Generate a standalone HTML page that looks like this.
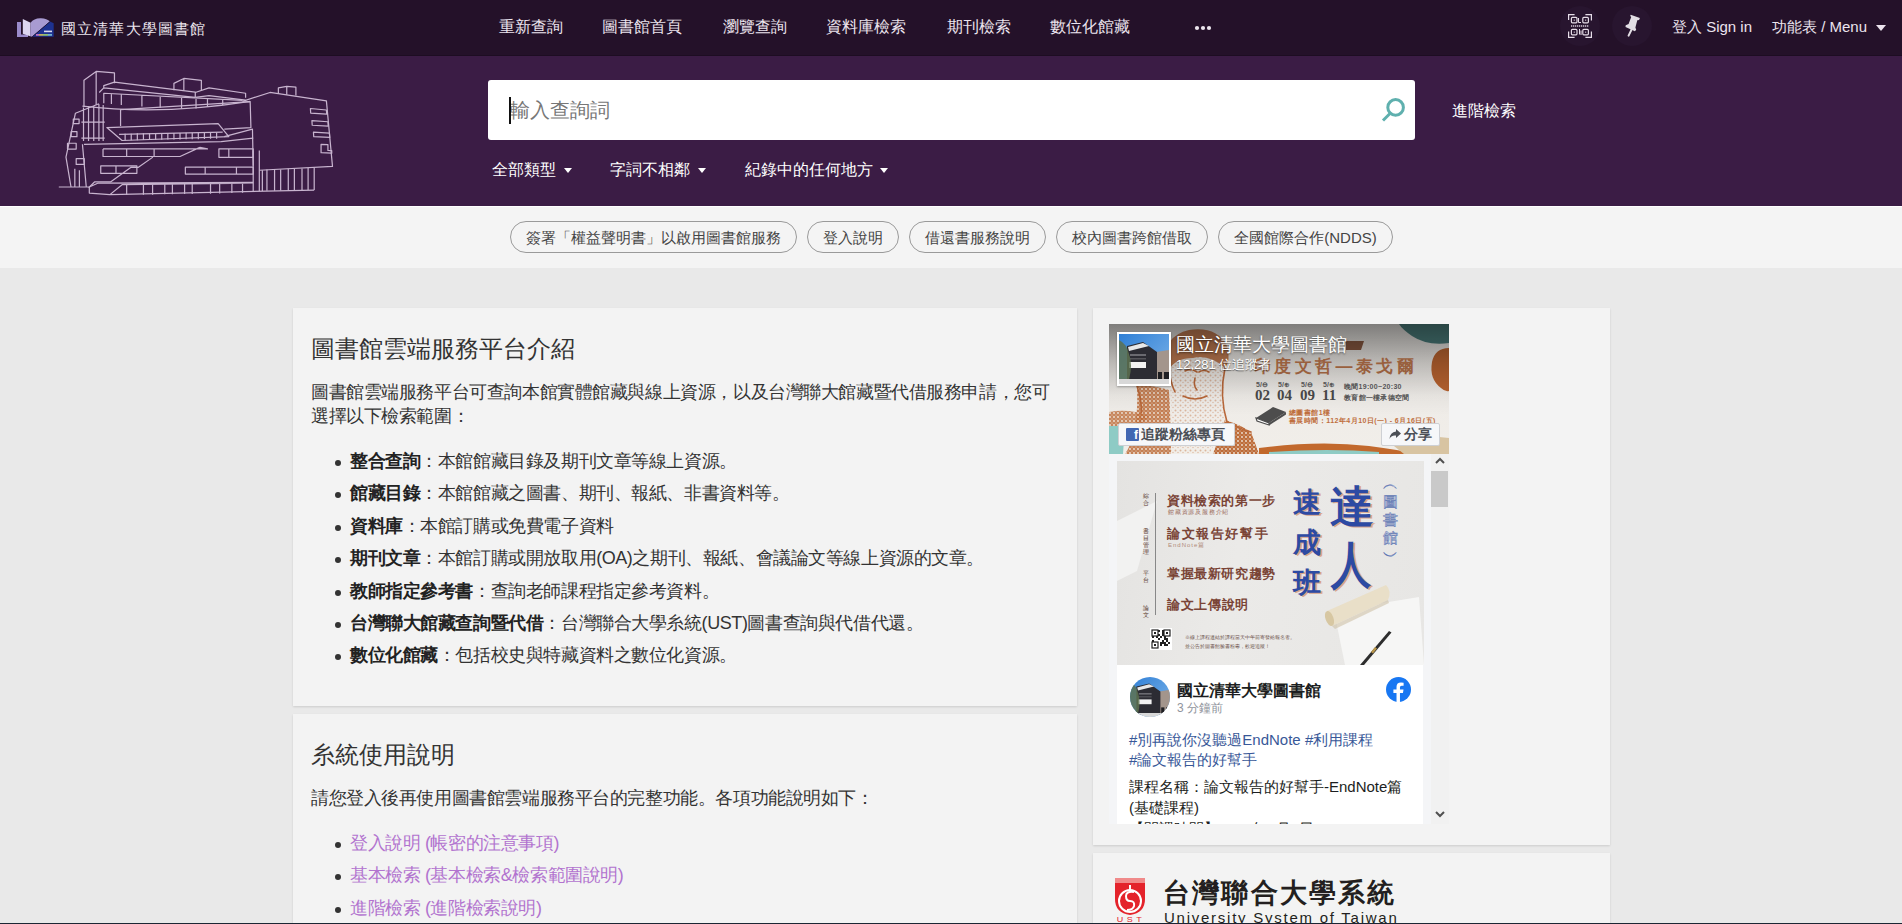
<!DOCTYPE html>
<html lang="zh-Hant">
<head>
<meta charset="utf-8">
<title>圖書館雲端服務平台</title>
<style>
*{box-sizing:border-box;margin:0;padding:0}
html,body{width:1902px;height:924px;overflow:hidden}
body{background:#e9e9e9;font-family:"Liberation Sans",sans-serif;color:#333;position:relative}
.abs{position:absolute}
#nav{position:absolute;left:0;top:0;width:1902px;height:56px;background:#241129;border-bottom:1px solid #1d0d22}
.nv{position:absolute;top:16px;font-size:16px;line-height:22px;font-weight:500;color:#ece4ee;white-space:nowrap}
#band{position:absolute;left:0;top:56px;width:1902px;height:150px;background:#3b1c45}
#chipband{position:absolute;left:0;top:206px;width:1902px;height:62px;background:#f4f4f4;border-top:1px solid #fff}
.chip{position:absolute;top:221px;height:32px;border:1px solid #9a9a9a;border-radius:16px;font-size:15px;line-height:32px;color:#444;text-align:center;white-space:nowrap}
.card{position:absolute;background:#f3f3f3;box-shadow:0 1px 2px rgba(0,0,0,.12)}
.ttl{position:absolute;font-size:24px;line-height:30px;color:#333;white-space:nowrap}
.p{position:absolute;font-size:18px;letter-spacing:-0.42px;line-height:24px;color:#333;white-space:nowrap}
.li{position:absolute;font-size:18px;letter-spacing:-0.42px;line-height:24px;color:#333;white-space:nowrap}
.li b{font-weight:bold;color:#222}
.dot{position:absolute;width:6px;height:6px;border-radius:50%;background:#333}
.lk{color:#b274cf}
</style>
</head>
<body>
<div id="nav"></div>
<div id="band"></div>
<div id="chipband"></div>

<!-- logo -->
<svg class="abs" style="left:14px;top:16px" width="44" height="24" viewBox="0 0 44 24">
<path d="M3 6 H7 V18.5 H14 V21 H3 Z" fill="#9a8bcb"/>
<path d="M8.8 3.1 L16.6 6.8 L16.1 20.3 L8.8 17.7 Z" fill="#ddd6f0"/>
<path d="M16.6 6.8 Q20 2 27 2.3 Q33 2.6 36 5.6 L18.2 20.8 L16.1 20.3 Z" fill="#a89bd2"/>
<path d="M36 5.6 L39.7 7.3 V20.8 H18.2 Z" fill="#1e3290"/>
<path d="M36 5.6 L18.2 20.8" stroke="#1a1030" stroke-width="0.8"/>
<rect x="30" y="14.6" width="8" height="1.6" fill="#d8d8ee"/>
<rect x="22" y="18" width="3" height="1.8" fill="#c070c0"/><rect x="25" y="18" width="4" height="1.8" fill="#c0b060"/><rect x="29" y="18" width="5" height="1.8" fill="#90c070"/><rect x="34" y="18" width="4" height="1.8" fill="#70b0d0"/>
</svg>
<div class="abs" style="left:61px;top:19px;font-size:15px;line-height:20px;letter-spacing:1.15px;color:#ece6ee;white-space:nowrap;font-weight:300;font-family:'Liberation Serif',serif">國立清華大學圖書館</div>
<svg class="abs" style="left:55px;top:65px" width="290" height="135" viewBox="0 0 1902 885" fill="none" stroke="#c8b4cf" stroke-width="8" stroke-linejoin="round">
<path d="M190 275 L190 100 L270 42 L390 52 L390 120 M270 42 L270 260"/>
<path d="M320 150 L320 135 L390 112 L920 178 L920 210 M290 180 L320 150 L920 212"/>
<path d="M780 165 L780 120 L845 88 L960 100 L960 165 M845 88 L845 165"/>
<path d="M920 180 L1010 150 L1250 185 L1250 215 M920 212 L1010 200 L1250 230"/>
<path d="M320 250 L320 185 L1230 232 M370 190 L370 255 M435 195 L435 262 M570 200 L570 272 M690 205 L690 280 M830 215 L830 285 M925 222 L925 285 M1000 225 L1000 275 M1100 230 L1100 262"/>
<path d="M180 270 Q700 330 1280 238"/>
<path d="M1230 238 L1410 180 L1780 235 L1820 665 L1340 690"/>
<path d="M1465 190 L1465 150 L1520 140 L1580 145 L1580 200 M1520 140 L1520 195"/>
<path d="M1675 285 L1780 295 L1782 322 L1677 315 Z M1685 365 L1790 372 L1792 400 L1687 395 Z M1695 440 L1800 447 L1802 475 L1697 470 Z M1745 520 L1790 522 L1790 560 L1815 562 L1815 578 L1745 575 Z"/>
<path d="M430 290 L430 400 M430 292 L1280 240 L1285 410 L1110 420"/>
<path d="M340 410 L1070 385 L1140 470 L440 495 Z M420 455 L1100 440"/>
<path d="M460 450 V495 M500 450 V494 M540 448 V493 M580 448 V492 M620 447 V491 M660 447 V490 M700 446 V490 M740 446 V489 M780 445 V488 M820 445 V488 M860 444 V487 M900 444 V486 M940 443 V486 M980 443 V485 M1020 442 V484 M1060 442 V483"/>
<path d="M1110 470 L1295 420 L1300 660"/>
<path d="M105 800 L72 604 L134 316 L288 254 M187 278 V499 M220 272 V499 M254 266 V499 M288 258 V499 M316 262 V499 M173 374 H326 M173 479 H326"/>
<path d="M120 355 H158 V384 H120 Z M106 437 H144 V470 H106 Z M82 513 H139 V551 H82 Z M139 614 H192 V652 H139 Z M130 680 V800 M160 690 V800"/>
<path d="M190 520 L1090 503 L1300 480 M180 520 L205 800"/>
<path d="M315 550 H1000 L950 540 M315 550 V600 H820 L950 540 M470 550 V600 M650 550 V600"/>
<path d="M300 662 H537 V710 H300 Z M400 662 V710 M221 805 L259 767 L364 767 L499 671 L547 671 L642 604"/>
<path d="M855 670 H1300 V715 H855 Z M985 670 V715 M1190 670 V715 M1075 550 H1300 V605 H1075 Z M1140 550 V605"/>
<path d="M25 800 H225 L280 775 L1300 770 M225 800 L225 840 L360 850 L1700 820 M360 850 L440 785 L1300 775"/>
<path d="M470 785 V850 M580 783 V850 M640 783 V850 M720 782 V848 M770 782 V848 M850 781 V846 M900 781 V846 M1020 780 V844 M1080 780 V842 M1160 778 V840 M1230 778 V838"/>
<path d="M1300 560 V830 M1340 560 V828 M1360 690 V826 M1390 685 V825 M1440 685 V824 M1480 685 V823 M1530 680 V822 M1570 680 V822 M1620 678 V821 M1660 675 V820 M1700 672 V820"/>
</svg>
<!-- nav items -->
<div class="nv" style="left:499px">重新查詢</div>
<div class="nv" style="left:602px">圖書館首頁</div>
<div class="nv" style="left:723px">瀏覽查詢</div>
<div class="nv" style="left:826px">資料庫檢索</div>
<div class="nv" style="left:947px">期刊檢索</div>
<div class="nv" style="left:1050px">數位化館藏</div>
<svg class="abs" style="left:1194px;top:25px" width="19" height="6" viewBox="0 0 19 6" fill="#ece6ee"><circle cx="3" cy="3" r="2.1"/><circle cx="9" cy="3" r="2.1"/><circle cx="15" cy="3" r="2.1"/></svg>
<div class="nv" style="left:1672px;top:16px;font-weight:normal;font-size:15px">登入 Sign in</div>
<div class="nv" style="left:1772px;top:16px;font-weight:normal;font-size:15px">功能表 / Menu</div>
<div class="abs" style="left:1876px;top:25px;width:0;height:0;border-left:5px solid transparent;border-right:5px solid transparent;border-top:6px solid #ece4ee"></div>
<!-- icon circles -->
<div class="abs" style="left:1560px;top:6px;width:40px;height:40px;border-radius:50%;background:#28152f"></div>
<div class="abs" style="left:1612px;top:6px;width:40px;height:40px;border-radius:50%;background:#28152f"></div>
<svg class="abs" style="left:1568px;top:14px" width="24" height="24" viewBox="0 0 24 24" fill="none" stroke="#e6dde8" stroke-width="1.2">
<path d="M0.6 6V0.6h6M17.4 0.6h6v6M23.4 17.4v6h-6M6.6 23.4H0.6v-6"/>
<rect x="3.4" y="3.4" width="5.6" height="5.4" rx="1"/><rect x="14.8" y="3.4" width="5.6" height="5.4" rx="1"/>
<rect x="3.4" y="15.4" width="5.6" height="5.4" rx="1"/><rect x="14.8" y="15.4" width="5.6" height="5.4" rx="1"/>
<g fill="#e6dde8" stroke="none"><rect x="5.7" y="5.6" width="1.1" height="1.1"/><rect x="17.1" y="5.6" width="1.1" height="1.1"/><rect x="5.7" y="17.6" width="1.1" height="1.1"/><rect x="17.1" y="17.6" width="1.1" height="1.1"/></g>
<path d="M10.5 4 V8.5 H13 M11.5 15 V20.5 M13 16.5 V21" stroke-width="1"/>
<path d="M3 12h18" stroke-dasharray="1.3 0.7" stroke="#a99cae" stroke-width="2.2"/>
</svg>
<svg class="abs" style="left:1622px;top:13px" width="22" height="24" viewBox="0 0 22 24">
<path d="M8.7 1.7 L17.9 5.1 L17.1 6.9 L15.3 7.2 L13.4 14.6 L14.2 16.7 L12.9 18.3 L3.5 14.1 L3.7 12.2 L6.6 10.9 L9.2 4.1 L8.2 3 Z" fill="#e2dee4"/>
<path d="M9.6 16.5 L6.6 22.6" stroke="#e2dee4" stroke-width="2" stroke-linecap="round"/>
</svg>

<!-- search -->
<div class="abs" style="left:488px;top:80px;width:927px;height:60px;background:#fff;border-radius:3px"></div>
<div class="abs" style="left:510px;top:96px;font-size:20px;line-height:28px;color:#777">輸入查詢詞</div>
<div class="abs" style="left:509px;top:97px;width:2px;height:27px;background:#111"></div>
<svg class="abs" style="left:1378px;top:94px" width="30" height="32" viewBox="0 0 30 32" fill="none" stroke="#5fb0ae" stroke-width="3">
<circle cx="17.6" cy="13.4" r="7.8"/><path d="M12 19.5 L5 26.5" stroke-linecap="butt"/></svg>
<div class="abs" style="left:564px;top:168px;width:0;height:0;border-left:4.5px solid transparent;border-right:4.5px solid transparent;border-top:5px solid #fff"></div>
<div class="abs" style="left:698px;top:168px;width:0;height:0;border-left:4.5px solid transparent;border-right:4.5px solid transparent;border-top:5px solid #fff"></div>
<div class="abs" style="left:880px;top:168px;width:0;height:0;border-left:4.5px solid transparent;border-right:4.5px solid transparent;border-top:5px solid #fff"></div>
<div class="abs" style="left:1452px;top:100px;font-size:16px;line-height:22px;color:#fff;font-weight:500">進階檢索</div>
<div class="abs" style="left:492px;top:159px;font-size:16px;line-height:22px;color:#fff">全部類型</div>
<div class="abs" style="left:610px;top:159px;font-size:16px;line-height:22px;color:#fff">字詞不相鄰</div>
<div class="abs" style="left:745px;top:159px;font-size:16px;line-height:22px;color:#fff">紀錄中的任何地方</div>

<!-- chips -->
<div class="chip" style="left:510px;width:287px">簽署「權益聲明書」以啟用圖書館服務</div>
<div class="chip" style="left:807px;width:92px">登入說明</div>
<div class="chip" style="left:909px;width:137px">借還書服務說明</div>
<div class="chip" style="left:1056px;width:152px">校內圖書跨館借取</div>
<div class="chip" style="left:1218px;width:175px">全國館際合作(NDDS)</div>

<!-- cards -->
<div class="card" style="left:293px;top:308px;width:784px;height:398px"></div>
<div class="card" style="left:293px;top:714px;width:784px;height:260px"></div>
<div class="card" style="left:1093px;top:308px;width:517px;height:537px"></div>
<div class="card" style="left:1093px;top:853px;width:517px;height:200px"></div>


<!-- card 1 content -->
<div class="ttl" style="left:311px;top:334px">圖書館雲端服務平台介紹</div>
<div class="p" style="left:311px;top:380px">圖書館雲端服務平台可查詢本館實體館藏與線上資源，以及台灣聯大館藏暨代借服務申請，您可</div>
<div class="p" style="left:311px;top:404px">選擇以下檢索範圍：</div>
<div class="dot" style="left:335px;top:460px"></div><div class="li" style="left:350px;top:449px"><b>整合查詢</b>：本館館藏目錄及期刊文章等線上資源。</div>
<div class="dot" style="left:335px;top:492px"></div><div class="li" style="left:350px;top:481px"><b>館藏目錄</b>：本館館藏之圖書、期刊、報紙、非書資料等。</div>
<div class="dot" style="left:335px;top:525px"></div><div class="li" style="left:350px;top:514px"><b>資料庫</b>：本館訂購或免費電子資料</div>
<div class="dot" style="left:335px;top:557px"></div><div class="li" style="left:350px;top:546px"><b>期刊文章</b>：本館訂購或開放取用(OA)之期刊、報紙、會議論文等線上資源的文章。</div>
<div class="dot" style="left:335px;top:590px"></div><div class="li" style="left:350px;top:579px"><b>教師指定參考書</b>：查詢老師課程指定參考資料。</div>
<div class="dot" style="left:335px;top:622px"></div><div class="li" style="left:350px;top:611px"><b>台灣聯大館藏查詢暨代借</b>：台灣聯合大學糸統(UST)圖書查詢與代借代還。</div>
<div class="dot" style="left:335px;top:654px"></div><div class="li" style="left:350px;top:643px"><b>數位化館藏</b>：包括校史與特藏資料之數位化資源。</div>
<!-- card 2 content -->
<div class="ttl" style="left:311px;top:740px">糸統使用說明</div>
<div class="p" style="left:311px;top:786px">請您登入後再使用圖書館雲端服務平台的完整功能。各項功能說明如下：</div>
<div class="dot" style="left:335px;top:842px"></div><div class="li lk" style="left:350px;top:831px">登入說明 (帳密的注意事項)</div>
<div class="dot" style="left:335px;top:874px"></div><div class="li lk" style="left:350px;top:863px">基本檢索 (基本檢索&amp;檢索範圍說明)</div>
<div class="dot" style="left:335px;top:907px"></div><div class="li lk" style="left:350px;top:896px">進階檢索 (進階檢索說明)</div>

<!-- FB widget -->
<div class="abs" style="left:1109px;top:324px;width:340px;height:500px;overflow:hidden;background:#f4f5f7">
 <!-- cover -->
 <div class="abs" style="left:0;top:0;width:340px;height:130px;overflow:hidden;background:linear-gradient(180deg,#e6e3df 0%,#efece8 60%,#f1eee9 100%)">
  <svg class="abs" style="left:0;top:0" width="340" height="130" viewBox="0 0 340 130">
   <path d="M290 0 L340 0 L340 19 Q318 22 303 12 Q293 5 290 0Z" fill="#4c7f7d"/>
   <path d="M340 24 Q326 24 323 38 Q320 55 332 64 Q336 68 340 67Z" fill="#b9632f"/>
   <defs>
    <pattern id="spk" width="4" height="4" patternUnits="userSpaceOnUse"><rect width="4" height="4" fill="#bd6c3a"/><circle cx="1" cy="1" r=".9" fill="#f0e6dc"/><circle cx="3" cy="3" r=".6" fill="#e8d6c6"/></pattern>
    <pattern id="spk2" width="5" height="5" patternUnits="userSpaceOnUse"><circle cx="1.5" cy="1.5" r="1" fill="#c27444"/><circle cx="4" cy="3.5" r=".7" fill="#c27444"/></pattern>
   </defs>
   <path d="M56 40 Q54 12 80 6 Q108 2 118 22 Q122 36 116 44 Q100 30 84 34 Q66 34 60 46Z" fill="#b86838" opacity=".85"/>
   <path d="M60 46 Q66 34 84 34 Q100 30 116 44 Q112 70 118 98 L100 130 L62 130 Q64 90 60 46Z" fill="url(#spk2)" opacity=".45"/>
   <path d="M28 62 Q40 60 60 66 Q62 100 62 130 L16 130 Q30 110 28 62Z" fill="url(#spk)" opacity=".85"/>
   <path d="M116 96 Q130 100 142 108 L150 130 L104 130Z" fill="url(#spk)"/>
   <g fill="none" stroke="#b9683a" stroke-width="1.6" stroke-linecap="round">
    <path d="M60 46 Q62 60 66 68 M116 44 Q110 72 118 98 Q128 104 142 108"/>
    <path d="M76 47 Q82 44 88 48 M90 48 Q95 45 100 48 M86 54 Q84 62 88 66 M74 72 Q86 78 98 72"/>
    <path d="M28 62 Q36 84 30 106"/>
   </g>
   <path d="M0 88 Q20 84 40 92 L30 102 L0 102Z" fill="url(#spk)" opacity=".8"/>
   <path d="M0 102 L16 102 L14 130 L0 130Z" fill="#8ecbc5"/>
   <path d="M150 124 Q210 116 260 122 Q290 126 310 130 L150 130Z" fill="#c2692d"/>
   <path d="M160 128 Q220 124 270 128 L270 130 L160 130Z" fill="#8ecbc5"/>
   <path d="M280 118 Q310 110 340 114 L340 130 L295 130Z" fill="#d8c4a2"/>
   <path d="M237 17 L255 17 L252 26 L237 26Z" fill="#8a5a42"/>
  </svg>
  <div class="abs" style="left:0;top:0;width:340px;height:130px;background:linear-gradient(180deg,rgba(0,0,0,.45) 0%,rgba(0,0,0,.2) 30%,rgba(0,0,0,.04) 55%,rgba(0,0,0,0) 70%)"></div>
  <div class="abs" style="left:145px;top:32px;font-size:17px;line-height:22px;font-weight:bold;color:#99603e;letter-spacing:3.4px;white-space:nowrap">印度文哲—泰戈爾</div>
  <div class="abs" style="left:147px;top:57px;font-size:7px;line-height:8px;color:#555;white-space:nowrap;font-weight:bold">5/⊖</div><div class="abs" style="left:146px;top:63px;font-size:15px;line-height:16px;font-weight:bold;color:#474747;white-space:nowrap;font-family:'Liberation Serif',serif">02</div><div class="abs" style="left:169px;top:57px;font-size:7px;line-height:8px;color:#555;white-space:nowrap;font-weight:bold">5/⊕</div><div class="abs" style="left:168px;top:63px;font-size:15px;line-height:16px;font-weight:bold;color:#474747;white-space:nowrap;font-family:'Liberation Serif',serif">04</div><div class="abs" style="left:192px;top:57px;font-size:7px;line-height:8px;color:#555;white-space:nowrap;font-weight:bold">5/⊖</div><div class="abs" style="left:191px;top:63px;font-size:15px;line-height:16px;font-weight:bold;color:#474747;white-space:nowrap;font-family:'Liberation Serif',serif">09</div><div class="abs" style="left:214px;top:57px;font-size:7px;line-height:8px;color:#555;white-space:nowrap;font-weight:bold">5/⊕</div><div class="abs" style="left:213px;top:63px;font-size:15px;line-height:16px;font-weight:bold;color:#474747;white-space:nowrap;font-family:'Liberation Serif',serif">11</div>
  <div class="abs" style="left:235px;top:57px;font-size:7px;line-height:11px;color:#555;white-space:nowrap;font-weight:bold;letter-spacing:.3px">晚間19:00~20:30<br>教育館一樓承德空間</div>
  <svg class="abs" style="left:146px;top:82px" width="32" height="20" viewBox="0 0 32 20"><path d="M1 12 L18 1 L31 6 L14 17 Z" fill="#4d4d4d"/><path d="M1 12 L14 17 L14 19 L2 15Z" fill="#fff" stroke="#4d4d4d" stroke-width="1.2"/><path d="M14 17 L31 6 L31 8.5 L14 19.5Z" fill="#4d4d4d"/></svg>
  <div class="abs" style="left:180px;top:85px;font-size:7px;line-height:8px;color:#bf6f3e;white-space:nowrap;font-weight:bold;letter-spacing:.45px">總圖書館1樓<br>書展時間：112年4月10日(一) - 6月16日(五)</div>
  <!-- avatar -->
  <div class="abs" style="left:8px;top:8px;width:54px;height:54px;background:#fff;padding:2px;box-shadow:0 1px 2px rgba(0,0,0,.3)"><svg width="50" height="50" viewBox="0 0 50 50" style="display:block"><defs><linearGradient id="skya" x1="0" y1="0" x2="1" y2="1"><stop offset="0" stop-color="#2f7fd6"/><stop offset="1" stop-color="#7fb6ea"/></linearGradient></defs>
<rect width="50" height="50" fill="url(#skya)"/>
<path d="M37 18 L50 16 V46 H37Z" fill="#a3958c"/>
<path d="M8 12 L24 8 L38 18 L38 47 L8 47Z" fill="#2c2c33"/>
<path d="M9 13 L24 9 L30 12 L10 17Z" fill="#e8e8e8"/>
<rect x="11" y="20" width="16" height="2" fill="#6a6a70"/><rect x="11" y="24" width="16" height="1.5" fill="#55555a"/>
<rect x="10" y="28" width="17" height="6" fill="#f2f2f2"/>
<rect x="39" y="38" width="4" height="8" fill="#1e1e22"/><rect x="45" y="38" width="5" height="8" fill="#1e1e22"/>
<path d="M0 6 Q8 10 10 20 Q14 30 10 46 L0 46Z" fill="#5d7150" opacity=".85"/>
<rect x="0" y="45" width="50" height="5" fill="#d8d8d8"/>
</svg></div>
  <div class="abs" style="left:67px;top:10px;font-size:19px;line-height:22px;color:#fff;white-space:nowrap;text-shadow:0 1px 2px rgba(0,0,0,.6)">國立清華大學圖書館</div>
  <div class="abs" style="left:67px;top:33px;font-size:13px;line-height:16px;color:#fff;white-space:nowrap;text-shadow:0 1px 1px rgba(0,0,0,.55)">12,281 位追蹤者</div>
  <!-- buttons -->
  <div class="abs" style="left:9px;top:99px;width:117px;height:23px;background:#f6f7f9;border:1px solid #ced0d4;border-radius:2px"></div>
  <div class="abs" style="left:17px;top:104px;width:13px;height:13px;background:#4267b2;border-radius:1px;color:#fff;font-size:12px;line-height:15px;font-weight:bold;text-align:right;padding-right:1px;overflow:hidden">f</div>
  <div class="abs" style="left:32px;top:101px;font-size:14px;line-height:19px;font-weight:bold;color:#4b4f56;white-space:nowrap">追蹤粉絲專頁</div>
  <div class="abs" style="left:272px;top:99px;width:59px;height:23px;background:#f6f7f9;border:1px solid #ced0d4;border-radius:2px"></div>
  <svg class="abs" style="left:280px;top:104px" width="12" height="12" viewBox="0 0 12 12"><path d="M7 1 L12 5.5 L7 10 V7.5 Q2 7 0.5 11 Q1 4 7 3.5Z" fill="#4b4f56"/></svg>
  <div class="abs" style="left:295px;top:101px;font-size:14px;line-height:19px;font-weight:bold;color:#4b4f56;white-space:nowrap">分享</div>
 </div>
 <!-- scrollbar -->
 <div class="abs" style="left:322px;top:130px;width:18px;height:370px;background:#f1f1f1"></div>
 <svg class="abs" style="left:325px;top:133px" width="12" height="8" viewBox="0 0 12 8"><path d="M2 6 L6 2 L10 6" fill="none" stroke="#505050" stroke-width="2"/></svg>
 <div class="abs" style="left:322px;top:147px;width:17px;height:36px;background:#c9c9c9"></div>
 <svg class="abs" style="left:325px;top:486px" width="12" height="8" viewBox="0 0 12 8"><path d="M2 2 L6 6 L10 2" fill="none" stroke="#505050" stroke-width="2"/></svg>
 <!-- post image -->
 <div class="abs" style="left:8px;top:137px;width:307px;height:204px;overflow:hidden;background:linear-gradient(100deg,#e4e3e1 0%,#ebeae8 40%,#e7e6e4 100%)">
  <svg class="abs" style="left:0;top:0" width="307" height="204" viewBox="0 0 307 204">
   <path d="M0 60 L40 40 L20 110 L0 120Z" fill="#f2f2f1"/>
   <path d="M217 150 L302 136 L307 204 L228 204Z" fill="#f6f6f5"/>
   <path d="M210 150 L269 124 Q275 130 271 139 L215 165 Z" fill="#e9dfc8"/>
   <ellipse cx="212.5" cy="157.5" rx="4" ry="7.8" transform="rotate(-20 212.5 157.5)" fill="#d7c7a2"/>
   <path d="M215 165 L271 139 L272 142 L218 168Z" fill="#cfc2a6" opacity=".6"/>
   <path d="M243 204 L272 170 L274.5 171.5 L247 204Z" fill="#2d2d2d"/>
   <path d="M254 191 L258 186 L260 187.5 L256 192.5Z" fill="#b8964a"/>
<rect x="38" y="32" width="1" height="122" fill="#888"/>
   <rect x="33" y="167" width="22" height="22" fill="#fff"/><rect x="41.0" y="169.0" width="2" height="2" fill="#222"/><rect x="45.0" y="169.0" width="2" height="2" fill="#222"/><rect x="45.0" y="171.0" width="2" height="2" fill="#222"/><rect x="41.0" y="173.0" width="2" height="2" fill="#222"/><rect x="45.0" y="173.0" width="2" height="2" fill="#222"/><rect x="35.0" y="175.0" width="2" height="2" fill="#222"/><rect x="39.0" y="175.0" width="2" height="2" fill="#222"/><rect x="43.0" y="175.0" width="2" height="2" fill="#222"/><rect x="47.0" y="175.0" width="2" height="2" fill="#222"/><rect x="41.0" y="177.0" width="2" height="2" fill="#222"/><rect x="47.0" y="177.0" width="2" height="2" fill="#222"/><rect x="49.0" y="177.0" width="2" height="2" fill="#222"/><rect x="35.0" y="179.0" width="2" height="2" fill="#222"/><rect x="45.0" y="179.0" width="2" height="2" fill="#222"/><rect x="49.0" y="179.0" width="2" height="2" fill="#222"/><rect x="43.0" y="181.0" width="2" height="2" fill="#222"/><rect x="45.0" y="181.0" width="2" height="2" fill="#222"/><rect x="47.0" y="181.0" width="2" height="2" fill="#222"/><rect x="51.0" y="181.0" width="2" height="2" fill="#222"/><rect x="43.0" y="183.0" width="2" height="2" fill="#222"/><rect x="47.0" y="183.0" width="2" height="2" fill="#222"/><rect x="49.0" y="183.0" width="2" height="2" fill="#222"/><rect x="35" y="169" width="6" height="6" fill="none" stroke="#222" stroke-width="1.2"/><rect x="47" y="169" width="6" height="6" fill="none" stroke="#222" stroke-width="1.2"/><rect x="35" y="181" width="6" height="6" fill="none" stroke="#222" stroke-width="1.2"/><rect x="37" y="171" width="2" height="2" fill="#222"/><rect x="49" y="171" width="2" height="2" fill="#222"/><rect x="37" y="183" width="2" height="2" fill="#222"/>
  </svg>
  <div class="abs" style="left:26px;top:32px;font-size:6px;line-height:7px;width:8px;color:#5a3a30;font-family:'Liberation Serif',serif">綜<br>合<br><br><br><br>書<br>目<br>管<br>理<br><br><br>平<br>台<br><br><br><br>論<br>文</div>
  <div class="abs" style="left:50px;top:33px;font-size:12.5px;line-height:14px;color:#7a4436;font-weight:bold;letter-spacing:0.6px;white-space:nowrap;font-family:'Liberation Serif',serif">資料檢索的第一步</div>
  <div class="abs" style="left:51px;top:48px;font-size:6px;line-height:7px;color:#9a6a5a;white-space:nowrap;letter-spacing:.8px">館藏資源及服務介紹</div>
  <div class="abs" style="left:50px;top:66px;font-size:12.5px;line-height:14px;color:#7a4436;font-weight:bold;letter-spacing:1.6px;white-space:nowrap;font-family:'Liberation Serif',serif">論文報告好幫手</div>
  <div class="abs" style="left:51px;top:81px;font-size:6px;line-height:7px;color:#b08a7a;white-space:nowrap;letter-spacing:1px">EndNote篇</div>
  <div class="abs" style="left:50px;top:106px;font-size:12.5px;line-height:14px;color:#7a4436;font-weight:bold;letter-spacing:0.6px;white-space:nowrap;font-family:'Liberation Serif',serif">掌握最新研究趨勢</div>
  <div class="abs" style="left:50px;top:137px;font-size:12.5px;line-height:14px;color:#7a4436;font-weight:bold;letter-spacing:0.7px;white-space:nowrap;font-family:'Liberation Serif',serif">論文上傳說明</div>
  <div class="abs" style="left:68px;top:172px;font-size:5px;line-height:9px;color:#6a5048;white-space:nowrap">※線上課程連結於課程當天中午前寄發給報名者。<br>並公告於圖書館臉書粉專，歡迎追蹤！</div>
  <div class="abs" style="left:176px;top:22px;font-size:28px;line-height:40px;width:30px;color:#2d4aa3;font-weight:bold;text-shadow:2px 1px 0 #d8a58c">速<br>成<br>班</div>
  <div class="abs" style="left:213px;top:18px;font-size:44px;line-height:56px;color:#2d4aa3;font-weight:bold;text-shadow:2px 1px 0 #d8a58c">達</div><div class="abs" style="left:214px;top:74px;font-size:50px;line-height:60px;color:#2d4aa3;font-weight:bold;text-shadow:2px 1px 0 #d8a58c;transform:scaleX(.8);transform-origin:0 0">人</div>
  <div class="abs" style="left:264px;top:14px;font-size:15px;line-height:18px;width:18px;color:#e9e8e6;-webkit-text-stroke:.5px #5a72b0;color:#dfe3ee;text-align:center">︵<br>圖<br>書<br>館<br>︶</div>
 </div>
 <!-- post card -->
 <div class="abs" style="left:8px;top:341px;width:306px;height:200px;background:#fff">
  <div class="abs" style="left:13px;top:12px;width:40px;height:40px;border-radius:50%;overflow:hidden"><svg width="40" height="40" viewBox="0 0 50 50" style="display:block"><defs><linearGradient id="skyb" x1="0" y1="0" x2="1" y2="1"><stop offset="0" stop-color="#2f7fd6"/><stop offset="1" stop-color="#7fb6ea"/></linearGradient></defs>
<rect width="50" height="50" fill="url(#skyb)"/>
<path d="M37 18 L50 16 V46 H37Z" fill="#a3958c"/>
<path d="M8 12 L24 8 L38 18 L38 47 L8 47Z" fill="#2c2c33"/>
<path d="M9 13 L24 9 L30 12 L10 17Z" fill="#e8e8e8"/>
<rect x="11" y="20" width="16" height="2" fill="#6a6a70"/><rect x="11" y="24" width="16" height="1.5" fill="#55555a"/>
<rect x="10" y="28" width="17" height="6" fill="#f2f2f2"/>
<rect x="39" y="38" width="4" height="8" fill="#1e1e22"/><rect x="45" y="38" width="5" height="8" fill="#1e1e22"/>
<path d="M0 6 Q8 10 10 20 Q14 30 10 46 L0 46Z" fill="#5d7150" opacity=".85"/>
<rect x="0" y="45" width="50" height="5" fill="#d8d8d8"/>
</svg></div>
  <div class="abs" style="left:60px;top:15px;font-size:16px;line-height:21px;font-weight:bold;color:#1c1e21;white-space:nowrap">國立清華大學圖書館</div>
  <div class="abs" style="left:60px;top:35px;font-size:12px;line-height:16px;color:#90949c;white-space:nowrap">3 分鐘前</div>
  <svg class="abs" style="left:269px;top:12px" width="25" height="25" viewBox="0 0 24 24"><circle cx="12" cy="12" r="12" fill="#1877f2"/><path d="M13.4 24 V15.3 H16.3 L16.8 11.9 H13.4 V9.8 Q13.4 8.3 15 8.3 H16.9 V5.4 Q15.8 5.2 14.4 5.2 Q10.1 5.2 10.1 9.4 V11.9 H7.1 V15.3 H10.1 V24Z" fill="#fff"/></svg>
  <div class="abs" style="left:12px;top:65px;font-size:15px;line-height:20px;color:#385898;white-space:nowrap">#別再說你沒聽過EndNote #利用課程<br>#論文報告的好幫手</div>
  <div class="abs" style="left:12px;top:111px;font-size:15px;line-height:21px;color:#1c1e21;white-space:nowrap">課程名稱：論文報告的好幫手-EndNote篇<br>(基礎課程)<br>【開課時間】2023年5月4日</div>
 </div>
</div>
<!-- UST logo -->
<svg class="abs" style="left:1112px;top:877px" width="36" height="46" viewBox="0 0 36 46">
 <path d="M3 1 H33 V22 Q33 36 18 38 Q3 36 3 22 Z" fill="#e4232b"/>
 <rect x="3" y="1" width="30" height="5" fill="#f08a8a"/>
 <circle cx="18" cy="24" r="11" fill="none" stroke="#fff" stroke-width="2"/>
 <path d="M18 8 V14 M22 15 Q14 14 14 19 Q14 24 18 24 Q23 24 22 29 Q21 33 15 33" fill="none" stroke="#fff" stroke-width="2"/>
 <text x="19" y="45.5" font-size="9" fill="#e4232b" text-anchor="middle" font-family="Liberation Sans" letter-spacing="3.5" transform="scale(1 .75) translate(0 15)">UST</text>
</svg>
<div class="abs" style="left:1163px;top:875px;font-size:27px;line-height:36px;font-weight:bold;color:#231f20;white-space:nowrap;letter-spacing:2.2px">台灣聯合大學系統</div>
<div class="abs" style="left:1164px;top:909px;font-size:15px;line-height:18px;color:#231f20;white-space:nowrap;letter-spacing:1.75px">University System of Taiwan</div>
<div style="position:absolute;left:0;top:923px;width:1902px;height:1px;background:#1b2633"></div>
</body>
</html>
